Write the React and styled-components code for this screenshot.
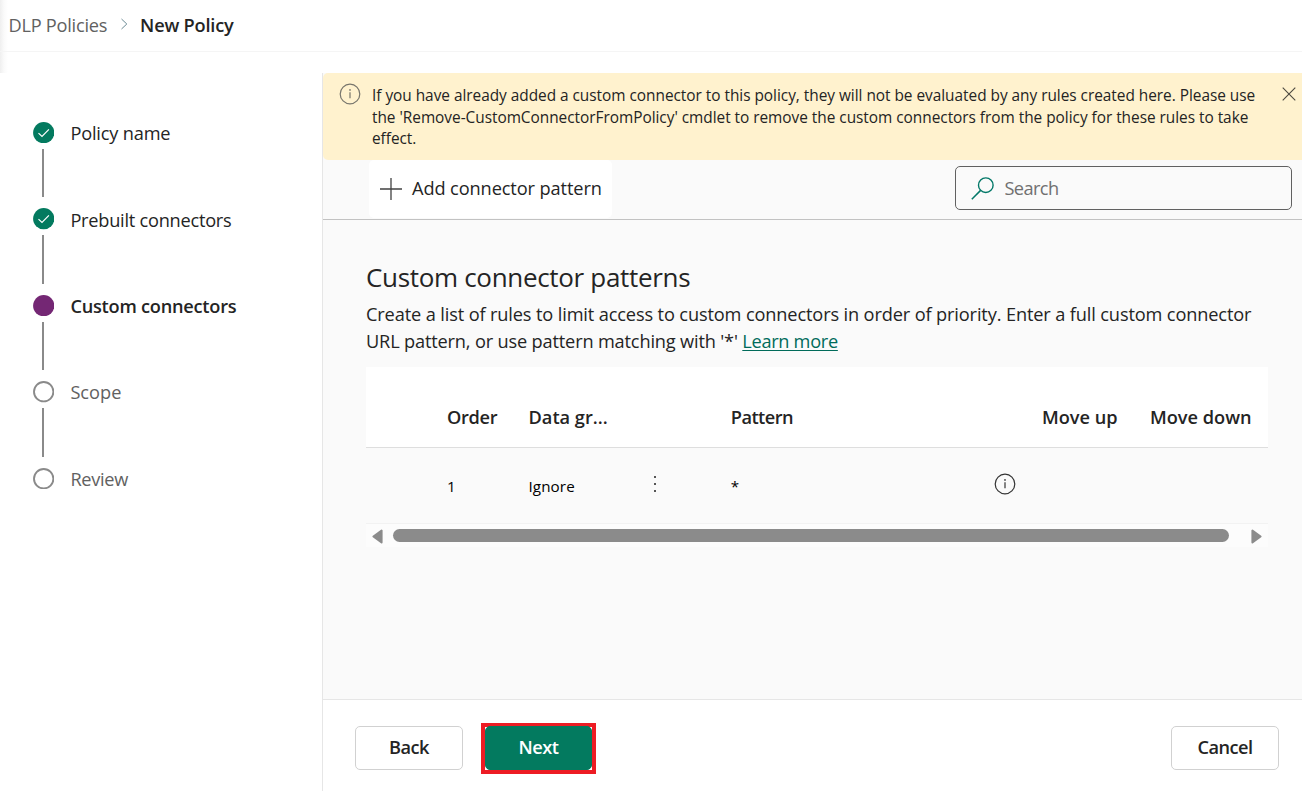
import React from "react";
import styled, { createGlobalStyle } from "styled-components";

const GlobalStyle = createGlobalStyle`
  * { box-sizing: border-box; }
  html, body { margin: 0; padding: 0; background: #fff; }
  body {
    font-family: "Segoe UI", "Open Sans", "Noto Sans", sans-serif;
    font-size: 18.2px;
    color: #242424;
    overflow: hidden;
  }
  button, input { font: inherit; color: inherit; letter-spacing: inherit; }
`;

const Page = styled.div`
  width: 1302px;
  height: 791px;
  display: flex;
  flex-direction: column;
  background: #fff;
`;

const Header = styled.header`
  height: 73px;
  flex: none;
  background: linear-gradient(to right, #efefef 0, #fafafa 4px, #fff 8px);
`;

const Breadcrumb = styled.nav`
  height: 52px;
  padding: 0 0 2px 8.5px;
  display: flex;
  align-items: center;
  border-bottom: 1px solid #f5f5f5;
  white-space: nowrap;
`;

const Crumb = styled.span`
  line-height: 26px;
  color: ${(p) => (p.$current ? "#242424" : "#616161")};
  font-weight: ${(p) => (p.$current ? 600 : 400)};
  letter-spacing: ${(p) => p.$track || 0}px;
`;

const CrumbArrow = styled.svg`
  width: 9px;
  height: 12px;
  margin: 0 11.5px 1px 12.5px;
  flex: none;
`;

const Body = styled.div`
  flex: 1;
  display: flex;
  min-height: 0;
`;

const Steps = styled.ol`
  width: 322px;
  flex: none;
  margin: 0;
  padding: 49px 0 0 32.6px;
  list-style: none;
`;

const StepItem = styled.li`
  height: 86.4px;
  display: flex;
  gap: 16.4px;
`;

const StepRail = styled.div`
  width: 21.4px;
  display: flex;
  flex-direction: column;
  align-items: center;
`;

const StepMark = styled.svg`
  width: 21.4px;
  height: 21.4px;
  flex: none;
`;

const StepLine = styled.div`
  width: 2px;
  height: 48.6px;
  margin: 5.5px 1px 0 0;
  background: #8a8a8a;
`;

const StepLabel = styled.span`
  margin-top: -0.8px;
  line-height: 24px;
  white-space: nowrap;
  color: ${(p) => (p.$state === "todo" ? "#616161" : "#242424")};
  font-weight: ${(p) => (p.$state === "current" ? 600 : 400)};
  letter-spacing: ${(p) => p.$track || 0}px;
`;

const Main = styled.main`
  flex: 1;
  min-width: 0;
  display: flex;
  flex-direction: column;
  border-left: 1px solid #e6e6e6;
  background: #fafafa;
`;

const Banner = styled.div`
  height: 87px;
  flex: none;
  display: flex;
  align-items: flex-start;
  padding: 10.4px 6px 0 15.6px;
  background: #fff2ce;
  border-radius: 5px 0 0 5px;
`;

const BannerText = styled.p`
  flex: 1;
  margin: 1.6px 0 0 11.4px;
  font-size: 15.4px;
  line-height: 21.6px;
  letter-spacing: -0.025px;
  white-space: nowrap;
`;

const CloseButton = styled.button`
  margin: 4px 0 0;
  padding: 0;
  border: 0;
  background: none;
  display: flex;
`;

const Toolbar = styled.div`
  height: 60px;
  flex: none;
  display: flex;
  align-items: flex-start;
  justify-content: space-between;
  padding: 0 10px 0 46px;
  border-bottom: 1px solid #c2c2c2;
`;

const AddButton = styled.button`
  width: 243px;
  height: 58px;
  padding: 0 0 0 11px;
  display: flex;
  align-items: center;
  gap: 10px;
  border: 0;
  border-radius: 5px;
  background: #fff;
  white-space: nowrap;
  letter-spacing: -0.1px;
`;

const AddLabel = styled.span`
  padding-bottom: 2px;
`;

const SearchBox = styled.label`
  width: 337px;
  height: 44px;
  margin-top: 6px;
  padding-left: 15px;
  display: flex;
  align-items: center;
  gap: 10.5px;
  border: 1px solid #616161;
  border-radius: 5px;
`;

const SearchInput = styled.input`
  width: 260px;
  padding: 0;
  border: 0;
  outline: 0;
  background: none;
  letter-spacing: -0.6px;
  &::placeholder { color: #707070; opacity: 1; }
`;

const Content = styled.section`
  flex: 1;
  min-height: 0;
  padding: 38px 34px 0 43px;
`;

const Title = styled.h1`
  margin: 0;
  font-size: 26px;
  font-weight: 400;
  line-height: 38px;
  letter-spacing: -0.32px;
  white-space: nowrap;
`;

const Description = styled.p`
  margin: 5px 0 0;
  line-height: 27px;
  letter-spacing: -0.135px;
  white-space: nowrap;
`;

const Hint = styled.span`
  letter-spacing: -0.17px;
`;

const Link = styled.a`
  color: #006b5a;
  letter-spacing: -0.3px;
  text-decoration: underline;
  text-decoration-thickness: 1px;
  text-underline-offset: 2px;
`;

const Grid = styled.div`
  margin-top: 12px;
  width: 902px;
`;

const GridRow = styled.div`
  display: grid;
  grid-template-columns: 81px 81.5px 121.5px 80.8px 263.5px 47.7px 108px 1fr;
  align-items: center;
`;

const GridHead = styled(GridRow)`
  height: 81px;
  padding-top: 19px;
  background: #fff;
  border-bottom: 1px solid #dedede;
  font-weight: 600;
`;

const GridItem = styled(GridRow)`
  height: 76px;
  border-bottom: 1px solid #f2f2f2;
  font-size: 15.2px;
  color: #000;
`;

const Cell = styled.div`
  min-width: 0;
  white-space: nowrap;
  letter-spacing: ${(p) => p.$track || 0}px;
  display: flex;
  align-items: center;
`;

const IconCell = styled(Cell)`
  padding-bottom: ${(p) => p.$lift}px;
`;

const Scrollbar = styled.div`
  height: 23px;
  padding: 0 6px;
  display: flex;
  align-items: center;
  background: #fcfcfc;
`;

const ScrollArrow = styled.svg`
  width: 11px;
  height: 15px;
  margin-top: 1px;
`;

const ScrollThumb = styled.div`
  width: 836px;
  height: 13px;
  margin: 0 22px 0 10px;
  border-radius: 7px;
  background: #8b8b8b;
`;

const Footer = styled.footer`
  height: 92px;
  flex: none;
  display: flex;
  align-items: center;
  padding: 5px 23px 0 32px;
  border-top: 1px solid #e6e6e6;
  background: #fff;
`;

const Button = styled.button`
  width: 108px;
  height: 44px;
  padding: 0 0 3px;
  border: 1px solid ${(p) => (p.$primary ? "#037a5f" : "#d1d1d1")};
  border-radius: 5px;
  background: ${(p) => (p.$primary ? "#037a5f" : "#fff")};
  color: ${(p) => (p.$primary ? "#fff" : "#242424")};
  font-weight: 600;
  letter-spacing: -0.5px;
`;

const Highlight = styled.div`
  width: 115px;
  height: 51px;
  margin: 0 auto 0 18px;
  border: 4px solid #ed1c24;
  display: flex;
  align-items: center;
  justify-content: center;
`;

function InfoIcon({ color }) {
  return (
    <svg width="22" height="22" viewBox="0 0 22 22" fill="none">
      <circle cx="11" cy="11" r="9.8" stroke={color} strokeWidth="1.2" />
      <path d="M11 9.3V15.2" stroke={color} strokeWidth="1.2" />
      <circle cx="11" cy="6.9" r="0.85" fill={color} />
    </svg>
  );
}

function Mark({ state }) {
  return (
    <StepMark viewBox="0 0 21.4 21.4" fill="none">
      {state === "todo" ? (
        <circle cx="10.7" cy="10.7" r="9.7" stroke="#8a8a8a" strokeWidth="1.9" />
      ) : (
        <circle cx="10.7" cy="10.7" r="10.6" fill={state === "done" ? "#037a5f" : "#742774"} />
      )}
      {state === "done" && <path d="M5.5 11.1L9 14.4L15.9 7.3" stroke="#fff" strokeWidth="1.2" />}
    </StepMark>
  );
}

const steps = [
  { label: "Policy name", state: "done", track: -0.18 },
  { label: "Prebuilt connectors", state: "done", track: -0.24 },
  { label: "Custom connectors", state: "current", track: -0.24 },
  { label: "Scope", state: "todo", track: 0 },
  { label: "Review", state: "todo", track: -0.3 },
];

export default function App() {
  return (
    <>
      <GlobalStyle />
      <Page>
        <Header>
          <Breadcrumb>
            <Crumb $track={-0.25}>DLP Policies</Crumb>
            <CrumbArrow viewBox="0 0 9 12" fill="none">
              <path d="M1.5 1L6.8 6L1.5 11" stroke="#6b8a94" strokeWidth="1" />
            </CrumbArrow>
            <Crumb $current $track={-0.2}>New Policy</Crumb>
          </Breadcrumb>
        </Header>
        <Body>
          <Steps>
            {steps.map((s, i) => (
              <StepItem key={s.label}>
                <StepRail>
                  <Mark state={s.state} />
                  {i < steps.length - 1 && <StepLine />}
                </StepRail>
                <StepLabel $state={s.state} $track={s.track}>{s.label}</StepLabel>
              </StepItem>
            ))}
          </Steps>
          <Main>
            <Banner>
              <InfoIcon color="#77756c" />
              <BannerText>
                If you have already added a custom connector to this policy, they will not be evaluated by any rules created here. Please use
                <br />
                the 'Remove-CustomConnectorFromPolicy' cmdlet to remove the custom connectors from the policy for these rules to take
                <br />
                effect.
              </BannerText>
              <CloseButton aria-label="Dismiss">
                <svg width="14" height="14" viewBox="0 0 14 14" fill="none">
                  <path d="M0.7 0.7L13.3 13.3M13.3 0.7L0.7 13.3" stroke="#4d4a40" strokeWidth="1.1" />
                </svg>
              </CloseButton>
            </Banner>
            <Toolbar>
              <AddButton>
                <svg width="22" height="22" viewBox="0 0 22 22" fill="none">
                  <path d="M0 11H22M11 0V22" stroke="#424242" strokeWidth="1.3" />
                </svg>
                <AddLabel>Add connector pattern</AddLabel>
              </AddButton>
              <SearchBox>
                <svg width="23" height="23" viewBox="0 0 23 23" fill="none">
                  <circle cx="14.8" cy="8.2" r="7.3" stroke="#037868" strokeWidth="1.4" />
                  <path d="M9.6 13.4L0.8 22.2" stroke="#037868" strokeWidth="1.5" />
                </svg>
                <SearchInput placeholder="Search" />
              </SearchBox>
            </Toolbar>
            <Content>
              <Title>Custom connector patterns</Title>
              <Description>
                Create a list of rules to limit access to custom connectors in order of priority. Enter a full custom connector
                <br />
                <Hint>URL pattern, or use pattern matching with '*' </Hint>
                <Link>Learn more</Link>
              </Description>
              <Grid>
                <GridHead>
                  <Cell />
                  <Cell $track={-0.3}>Order</Cell>
                  <Cell>Data gr...</Cell>
                  <Cell />
                  <Cell $track={-0.55}>Pattern</Cell>
                  <Cell />
                  <Cell>Move up</Cell>
                  <Cell>Move down</Cell>
                </GridHead>
                <GridItem>
                  <Cell />
                  <Cell>1</Cell>
                  <Cell $track={0.1}>Ignore</Cell>
                  <IconCell $lift={3}>
                    <svg width="10" height="18" viewBox="0 0 10 18" fill="#555">
                      <rect x="4" y="1" width="2" height="2" />
                      <rect x="4" y="8" width="2" height="2" />
                      <rect x="4" y="15" width="2" height="2" />
                    </svg>
                  </IconCell>
                  <Cell>*</Cell>
                  <IconCell $lift={3}>
                    <InfoIcon color="#333" />
                  </IconCell>
                  <Cell />
                  <Cell />
                </GridItem>
                <Scrollbar>
                  <ScrollArrow viewBox="0 0 11 15">
                    <path d="M9.6 1.6V13.4L1.4 7.5Z" fill="#8b8b8b" stroke="#8b8b8b" strokeWidth="2" strokeLinejoin="round" />
                  </ScrollArrow>
                  <ScrollThumb />
                  <ScrollArrow viewBox="0 0 11 15">
                    <path d="M1.4 1.6V13.4L9.6 7.5Z" fill="#8b8b8b" stroke="#8b8b8b" strokeWidth="2" strokeLinejoin="round" />
                  </ScrollArrow>
                </Scrollbar>
              </Grid>
            </Content>
            <Footer>
              <Button>Back</Button>
              <Highlight>
                <Button $primary>Next</Button>
              </Highlight>
              <Button>Cancel</Button>
            </Footer>
          </Main>
        </Body>
      </Page>
    </>
  );
}
